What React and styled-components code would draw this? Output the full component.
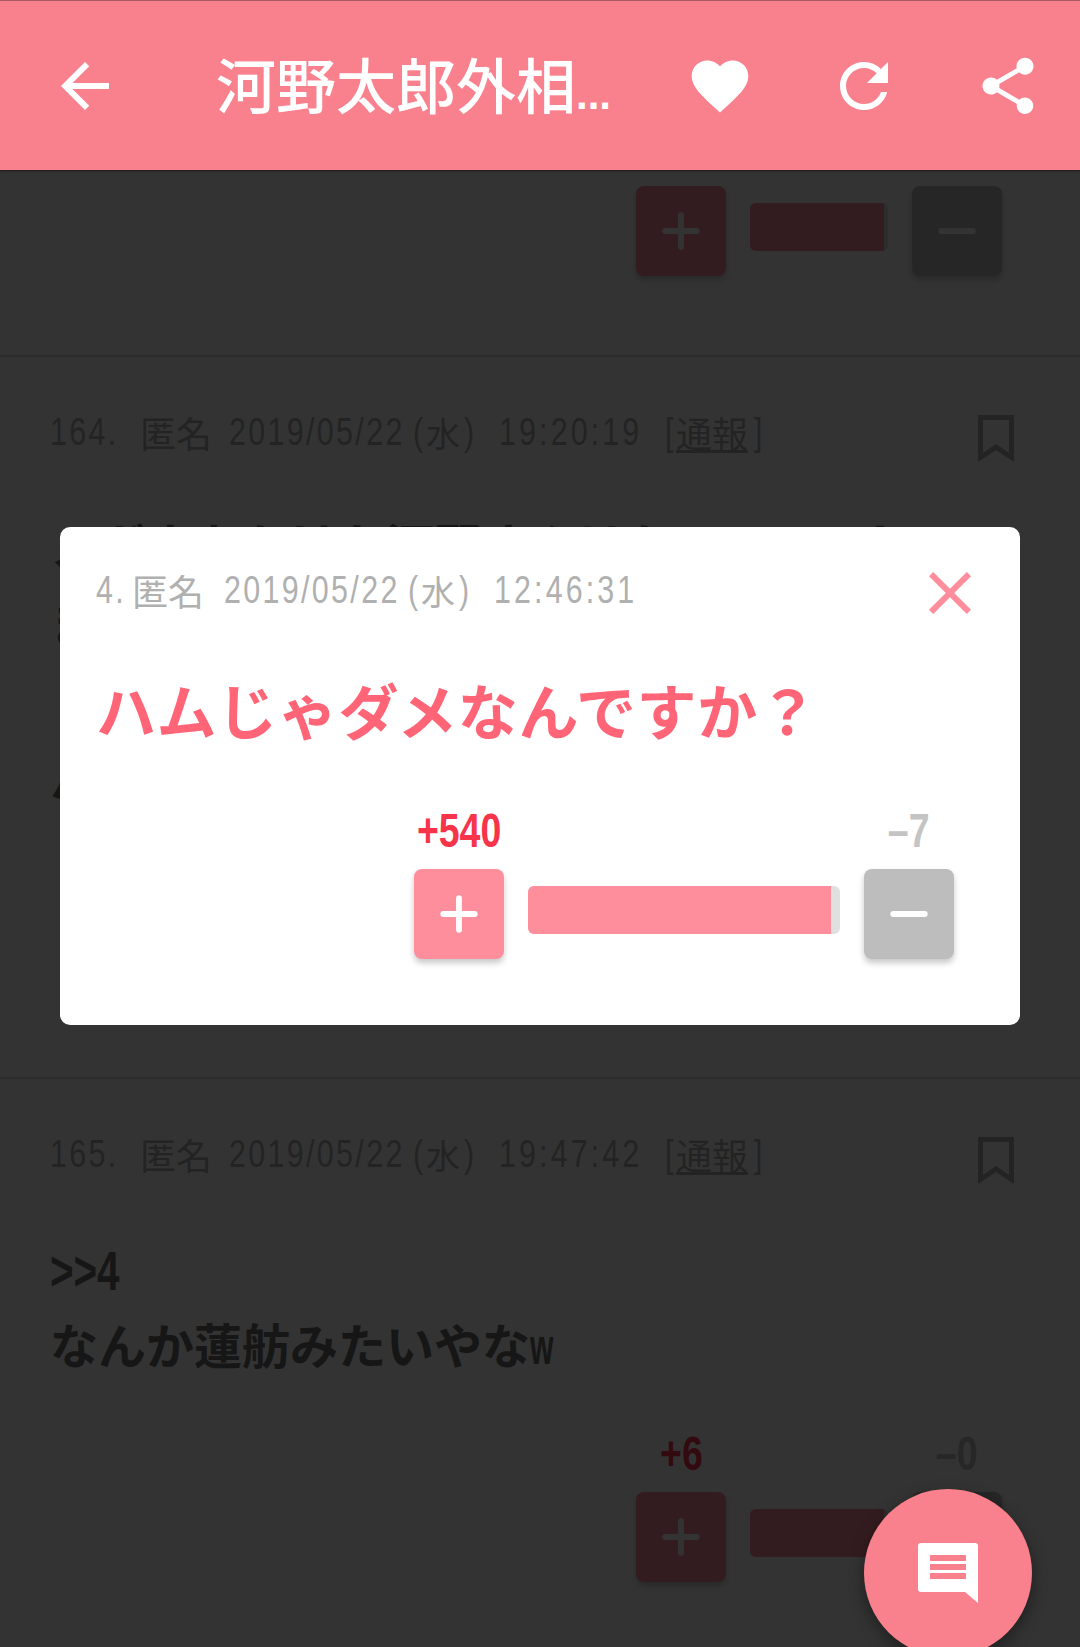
import React from "react";
import styled, { createGlobalStyle } from "styled-components";
import { MdArrowBack, MdFavorite, MdRefresh, MdShare, MdClose } from "react-icons/md";
import { Plus, Minus } from "lucide-react";

const CJK = `"Noto Sans CJK JP", "Noto Sans", sans-serif`;
const LATIN = `"Liberation Sans", Arial, sans-serif`;

const GlobalStyle = createGlobalStyle`
  html, body {
    margin: 0;
    padding: 0;
    background: #fff;
    font-family: ${CJK};
  }
`;

const Screen = styled.div`
  position: relative;
  width: 1080px;
  height: 1647px;
  overflow: hidden;
  background: #fff;
`;

const Header = styled.header`
  position: relative;
  z-index: 2;
  display: flex;
  align-items: center;
  box-sizing: border-box;
  height: 170px;
  padding: 0 36px 0 49px;
  background: #f9818d;
  color: #fff;
  border-top: 1px solid #a85a64;
  box-shadow: 0 1px 2px rgba(0, 0, 0, 0.5);
`;

const Title = styled.h1`
  flex: 1;
  margin: 6px 0 0 95px;
  font-size: 60px;
  font-weight: 500;
  line-height: 72px;
  white-space: nowrap;
`;

const TitleDots = styled.span`
  font-family: ${LATIN};
  font-size: 42px;
  font-weight: 700;
`;

const HeaderActions = styled.div`
  display: flex;
  gap: 72px;
`;

const HeaderIcon = styled.span`
  display: flex;
  align-items: center;
  justify-content: center;
  width: 72px;
  height: 72px;
`;

const Post = styled.article`
  box-sizing: border-box;
  padding: 54px 78px 80px 50px;
  border-bottom: 2px solid #dcdcdc;
`;

const TopPost = styled(Post)`
  padding-top: 16px;
  padding-bottom: 79px;
`;

const PostHead = styled.div`
  display: flex;
  justify-content: space-between;
  height: 93px;
  margin-right: -12px;
`;

const MetaRow = styled.div`
  display: flex;
  align-items: center;
  height: 36px;
  margin-top: 3px;
  color: #b0b0b0;
  white-space: nowrap;
`;

/* no condensed face is installed, so the latin runs are squeezed */
const Narrow = styled.span`
  flex: none;
  display: inline-block;
  width: ${(p) => p.$width}px;
  font-family: ${LATIN};
  font-size: 39px;
  letter-spacing: ${(p) => p.$spacing || 3}px;
  transform: scaleX(0.78);
  transform-origin: left center;
`;

const MetaName = styled.span`
  flex: none;
  width: ${(p) => p.$width}px;
  font-size: 36px;
`;

const MetaWeek = styled.span`
  flex: none;
  display: inline-flex;
  align-items: center;
  box-sizing: border-box;
  width: ${(p) => p.$width}px;
  padding-left: 3px;
  gap: 4px;
`;

const WeekChar = styled.span`
  font-size: 34px;
`;

const ReportLink = styled.u`
  font-size: 36px;
  margin: 0 6px 0 0;
`;

const BookmarkIcon = styled.svg`
  display: block;
  margin-top: 4px;
  color: #b0b0b0;
`;

const Body = styled.div`
  font-size: 48px;
  font-weight: 700;
  line-height: 78px;
  color: #6e6e6e;
  white-space: nowrap;
`;

const Anchor = styled.div`
  margin: 6px 0 -6px;
  font-family: ${LATIN};
  font-size: 56px;
  transform: scaleX(0.72);
  transform-origin: left center;
`;

const TrailingW = styled.span`
  display: inline-block;
  font-family: ${LATIN};
  font-size: 52px;
  transform: scaleX(0.58);
  transform-origin: left center;
`;

const Votes = styled.div`
  display: grid;
  grid-template-columns: 90px 1fr 90px;
  grid-template-rows: 57px 90px;
  column-gap: 24px;
  width: ${(p) => p.$width}px;
  margin: ${(p) => p.$gap || 0}px 0 0 auto;
`;

const Count = styled.span`
  grid-column: ${(p) => (p.$minus ? 3 : 1)};
  grid-row: 1;
  justify-self: center;
  align-self: start;
  margin-top: -5px;
  font-family: ${LATIN};
  font-size: 48px;
  font-weight: 700;
  line-height: 48px;
  color: ${(p) => (p.$minus ? "#c4c4c4" : "#f7344a")};
  white-space: nowrap;
  transform: scaleX(0.78);
`;

const VoteButton = styled.div`
  grid-column: ${(p) => (p.$minus ? 3 : 1)};
  grid-row: 2;
  display: flex;
  align-items: center;
  justify-content: center;
  border-radius: 8px;
  color: #fff;
  background: ${(p) => (p.$minus ? "#bdbdbd" : "#ff8e9c")};
  box-shadow: 0 4px 6px rgba(0, 0, 0, 0.22);
`;

const Bar = styled.div`
  grid-column: 2;
  grid-row: 2;
  align-self: start;
  height: 48px;
  margin-top: 17px;
  border-radius: 6px;
  overflow: hidden;
  background: #e0e0e0;
`;

const BarFill = styled.div`
  height: 100%;
  background: #ff8e9c;
`;

const Scrim = styled.div`
  position: absolute;
  inset: 0;
  z-index: 1;
  box-sizing: border-box;
  padding: 527px 60px 0;
  background: rgba(0, 0, 0, 0.8);
`;

const Modal = styled.section`
  box-sizing: border-box;
  height: 498px;
  padding: 42px 66px 0 36px;
  border-radius: 10px;
  background: #fff;
`;

const ModalHead = styled.div`
  display: flex;
  justify-content: space-between;
  height: 95px;
  margin-right: -32px;
`;

const CloseIcon = styled.span`
  display: flex;
  height: 72px;
  margin-top: -12px;
  color: #ff8e9c;
`;

const Question = styled.p`
  margin: 0;
  height: 148px;
  font-size: 60px;
  font-weight: 700;
  line-height: 90px;
  letter-spacing: 0.6px;
  color: #ff6577;
  white-space: nowrap;
`;

const Fab = styled.div`
  position: absolute;
  z-index: 3;
  left: 864px;
  top: 1489px;
  display: flex;
  justify-content: center;
  box-sizing: border-box;
  width: 168px;
  height: 168px;
  padding-top: 54px;
  border-radius: 50%;
  background: #f9818d;
  box-shadow: 0 6px 16px rgba(0, 0, 0, 0.4);
`;

const VoteBlock = ({ plus, minus, ratio, width, gap, hideCounts }) => (
  <Votes $width={width} $gap={gap}>
    {!hideCounts && <Count>+{plus}</Count>}
    {!hideCounts && <Count $minus>–{minus}</Count>}
    <VoteButton>
      <Plus size={54} strokeWidth={2.6} />
    </VoteButton>
    <Bar>
      <BarFill style={{ width: `${ratio}%` }} />
    </Bar>
    <VoteButton $minus>
      <Minus size={54} strokeWidth={2.6} />
    </VoteButton>
  </Votes>
);

const Week = ({ width }) => (
  <MetaWeek $width={width}>
    <Narrow $width={9}>(</Narrow>
    <WeekChar>水</WeekChar>
    <Narrow $width={9}>)</Narrow>
  </MetaWeek>
);

const Bookmark = () => (
  <BookmarkIcon width="36" height="47" viewBox="0 0 36 47">
    <path fillRule="evenodd" fill="currentColor" d="M0 0h36v47L18 35 0 47zM5 5v33l13-9 13 9V5z" />
  </BookmarkIcon>
);

const PostMeta = ({ num, time }) => (
  <PostHead>
    <MetaRow>
      <Narrow $width={90}>{num}.</Narrow>
      <MetaName $width={89}>匿名</MetaName>
      <Narrow $width={181}>2019/05/22</Narrow>
      <Week width={89} />
      <Narrow $width={166} $spacing={4}>{time}</Narrow>
      <Narrow $width={11}>[</Narrow>
      <ReportLink>通報</ReportLink>
      <Narrow $width={10}>]</Narrow>
    </MetaRow>
    <Bookmark />
  </PostHead>
);

const ChatIcon = () => (
  <svg width="60" height="60" viewBox="0 0 60 60">
    <path d="M3 0h54a3 3 0 0 1 3 3v57L47 49H3a3 3 0 0 1-3-3V3a3 3 0 0 1 3-3z" fill="#fff" />
    <path d="M12 12h36v6H12zM12 21h36v6H12zM12 30h36v6H12z" fill="#f9818d" />
  </svg>
);

export default function App() {
  return (
    <Screen>
      <GlobalStyle />
      <Header>
        <MdArrowBack size={72} />
        <Title>
          河野太郎外相<TitleDots>...</TitleDots>
        </Title>
        <HeaderActions>
          <HeaderIcon>
            <MdFavorite size={68} />
          </HeaderIcon>
          <HeaderIcon>
            <MdRefresh size={72} />
          </HeaderIcon>
          <HeaderIcon>
            <MdShare size={68} />
          </HeaderIcon>
        </HeaderActions>
      </Header>

      <TopPost>
        <VoteBlock hideCounts ratio={97} width={366} gap={-57} />
      </TopPost>

      <Post>
        <PostMeta num={164} time="19:20:19" />
        <Body>
          メガネをかけた河野さんはかっこいいし
          <br />
          まいし外相としてかなり頑張っていると思う
          <br />
          「これからも応援したい」
          <br />
          ハムも食べたい
        </Body>
        <VoteBlock plus={12} minus={1} ratio={92} width={366} gap={34} />
      </Post>

      <Post>
        <PostMeta num={165} time="19:47:42" />
        <Body>
          <Anchor>&gt;&gt;4</Anchor>
          なんか蓮舫みたいやな<TrailingW>w</TrailingW>
        </Body>
        <VoteBlock plus={6} minus={0} ratio={97} width={366} gap={50} />
      </Post>

      <Scrim>
        <Modal>
          <ModalHead>
            <MetaRow>
              <Narrow $width={36}>4.</Narrow>
              <MetaName $width={92}>匿名</MetaName>
              <Narrow $width={181}>2019/05/22</Narrow>
              <Week width={89} />
              <Narrow $width={166} $spacing={4}>12:46:31</Narrow>
            </MetaRow>
            <CloseIcon>
              <MdClose size={72} />
            </CloseIcon>
          </ModalHead>
          <Question>ハムじゃダメなんですか？</Question>
          <VoteBlock plus={540} minus={7} ratio={97} width={540} />
        </Modal>
      </Scrim>

      <Fab>
        <ChatIcon />
      </Fab>
    </Screen>
  );
}
